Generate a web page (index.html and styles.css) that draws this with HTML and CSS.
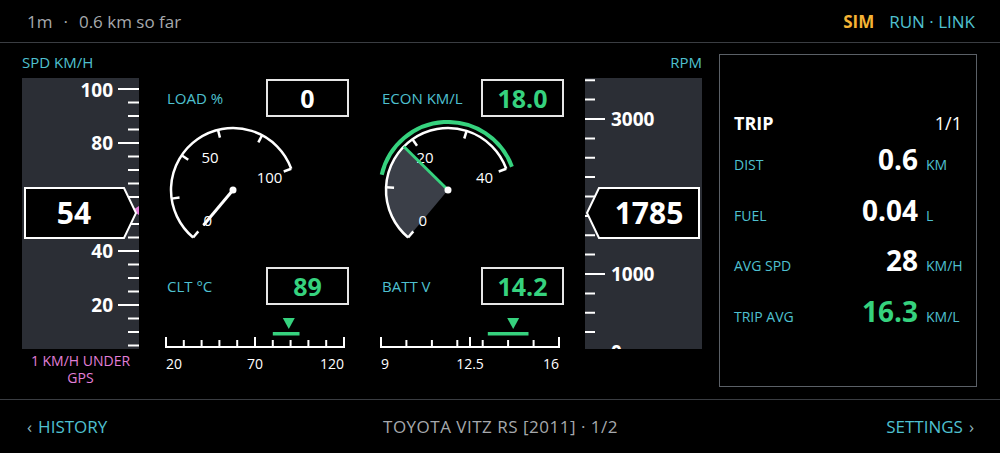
FILE: index.html
```html
<!DOCTYPE html>
<html lang="en">
<head>
  <meta charset="UTF-8" />
  <meta name="viewport" content="width=device-width, initial-scale=1.0" />
  <title>Trip Dash</title>
  <link rel="stylesheet" href="styles.css">
</head>
<body>
  <header class="topbar">
    <span class="sofar">1m<span class="dot">·</span>0.6 km so far</span>
    <span class="status"><b class="sim">SIM</b><span class="link">RUN · LINK</span></span>
  </header>

  <main class="dash">
    <!-- Geschwindigkeitsband -->
    <section class="tape-col">
      <p class="tape-label">SPD KM/H</p>
      <div class="tape">
        <svg width="117" height="271" viewBox="0 0 117 271">
          <path class="ticks" d="M96 11H117M106 24.5H117M106 38H117M106 51.5H117M96 65H117M106 78.5H117M106 92H117M106 105.5H117M96 119H117M106 132.5H117M106 146H117M106 159.5H117M96 173H117M106 186.5H117M106 200H117M106 213.5H117M96 227H117M106 240.5H117M106 254H117M106 267.5H117"/>
          <g class="tape-nums end">
            <text x="91" y="12">100</text>
            <text x="91" y="65">80</text>
            <text x="91" y="173">40</text>
            <text x="91" y="227">20</text>
          </g>
          <polygon class="gps-mark" points="117,128 110,132.5 117,137"/>
          <polygon class="readout" points="3,110 102,110 114,135 102,160 3,160"/>
          <text class="readout-num" x="52" y="134">54</text>
        </svg>
      </div>
      <p class="tape-note"><span>1 KM/H UNDER</span><span>GPS</span></p>
    </section>

    <section class="gauges">
      <div class="gauge">
        <div class="g-head"><span class="g-label">LOAD %</span><span class="g-value">0</span></div>
        <svg class="dial" width="190" height="130" viewBox="0 0 190 130">
          <path class="dial-arc" d="M33.15 117.49A62 62 0 1 1 131.26 48.79"/>
          <g class="dial-ticks">
            <line x1="127" y1="70" x2="135" y2="70" transform="rotate(-230 73 70)"/>
            <line x1="127" y1="70" x2="135" y2="70" transform="rotate(-188 73 70)"/>
            <line x1="127" y1="70" x2="135" y2="70" transform="rotate(-146 73 70)"/>
            <line x1="127" y1="70" x2="135" y2="70" transform="rotate(-104 73 70)"/>
            <line x1="127" y1="70" x2="135" y2="70" transform="rotate(-62 73 70)"/>
            <line x1="127" y1="70" x2="135" y2="70" transform="rotate(-20 73 70)"/>
          </g>
          <g class="dial-nums">
            <text x="47.9" y="99.9">0</text>
            <text x="50.1" y="37.2">50</text>
            <text x="109.6" y="56.7">100</text>
          </g>
          <line class="needle" x1="73" y1="70" x2="118" y2="70" transform="rotate(-230 73 70)"/>
          <circle class="hub" cx="73" cy="70" r="3.5"/>
        </svg>
      </div>

      <div class="gauge">
        <div class="g-head"><span class="g-label">ECON KM/L</span><span class="g-value gut">18.0</span></div>
        <svg class="dial" width="190" height="130" viewBox="0 0 190 130">
          <path class="sector" d="M73 70L33.15 117.49A62 62 0 0 1 28.78 26.55Z"/>
          <path class="green-arc" d="M6.74 54.7A68 68 0 0 1 136.9 46.74"/>
          <path class="dial-arc" d="M33.15 117.49A62 62 0 1 1 131.26 48.79"/>
          <g class="dial-ticks">
            <line x1="127" y1="70" x2="135" y2="70" transform="rotate(-230 73 70)"/>
            <line x1="127" y1="70" x2="135" y2="70" transform="rotate(-177.5 73 70)"/>
            <line x1="127" y1="70" x2="135" y2="70" transform="rotate(-125 73 70)"/>
            <line x1="127" y1="70" x2="135" y2="70" transform="rotate(-72.5 73 70)"/>
            <line x1="127" y1="70" x2="135" y2="70" transform="rotate(-20 73 70)"/>
          </g>
          <g class="dial-nums">
            <text x="47.9" y="99.9">0</text>
            <text x="50.1" y="37.2">20</text>
            <text x="109.6" y="56.7">40</text>
          </g>
          <line class="needle gruen" x1="73" y1="70" x2="135" y2="70" transform="rotate(-135.5 73 70)"/>
          <circle class="hub" cx="73" cy="70" r="3.5"/>
        </svg>
      </div>

      <div class="gauge">
        <div class="g-head"><span class="g-label">CLT °C</span><span class="g-value gut">89</span></div>
        <svg class="scale" width="190" height="62" viewBox="0 0 190 62">
          <rect class="band" x="112.8" y="20" width="26.7" height="3.5"/>
          <polygon class="marker" points="122.8,6 134.8,6 128.8,17"/>
          <path class="scale-line" d="M6 35H184M6 26V35M23.8 29V35M41.6 29V35M59.4 29V35M77.2 29V35M95 26V35M112.8 29V35M130.6 29V35M148.4 29V35M166.2 29V35M184 26V35"/>
          <g class="scale-nums">
            <text x="6" y="51" text-anchor="start">20</text>
            <text x="95" y="51" text-anchor="middle">70</text>
            <text x="184" y="51" text-anchor="end">120</text>
          </g>
        </svg>
      </div>

      <div class="gauge">
        <div class="g-head"><span class="g-label">BATT V</span><span class="g-value gut">14.2</span></div>
        <svg class="scale" width="190" height="62" viewBox="0 0 190 62">
          <rect class="band" x="112.8" y="20" width="40.7" height="3.5"/>
          <polygon class="marker" points="132.2,6 144.2,6 138.2,17"/>
          <path class="scale-line" d="M6 35H184M6 26V35M31.4 29V35M56.9 29V35M82.3 29V35M95 26V35M107.7 29V35M133.1 29V35M158.6 29V35M184 26V35"/>
          <g class="scale-nums">
            <text x="6" y="51" text-anchor="start">9</text>
            <text x="95" y="51" text-anchor="middle">12.5</text>
            <text x="184" y="51" text-anchor="end">16</text>
          </g>
        </svg>
      </div>
    </section>

    <!-- Drehzahlband -->
    <section class="tape-col rpm">
      <p class="tape-label">RPM</p>
      <div class="tape">
        <svg width="117" height="271" viewBox="0 0 117 271">
          <path class="ticks" d="M0 2.25H10M0 21.6H10M0 41H20M0 60.4H10M0 79.75H10M0 99.1H10M0 118.5H20M0 137.9H10M0 157.25H10M0 176.6H10M0 196H20M0 215.4H10M0 234.75H10M0 254.1H10M0 273.5H20"/>
          <g class="tape-nums">
            <text x="26" y="41">3000</text>
            <text x="26" y="196">1000</text>
            <text x="26" y="273.5">0</text>
          </g>
          <polygon class="readout" points="2,135 14,110 114,110 114,160 14,160"/>
          <text class="readout-num" x="64" y="134">1785</text>
        </svg>
      </div>
    </section>

    <aside class="trip">
      <div class="trip-head"><b>TRIP</b><span>1/1</span></div>
      <div class="trip-row"><span class="t-label">DIST</span><span class="t-val">0.6</span><span class="t-unit">KM</span></div>
      <div class="trip-row"><span class="t-label">FUEL</span><span class="t-val">0.04</span><span class="t-unit">L</span></div>
      <div class="trip-row"><span class="t-label">AVG SPD</span><span class="t-val">28</span><span class="t-unit">KM/H</span></div>
      <div class="trip-row"><span class="t-label">TRIP AVG</span><span class="t-val gut">16.3</span><span class="t-unit">KM/L</span></div>
    </aside>
  </main>

  <footer class="bottombar">
    <a class="nav"><span class="chev">‹</span>HISTORY</a>
    <span class="car">TOYOTA VITZ RS [2011] · 1/2</span>
    <a class="nav rechts">SETTINGS<span class="chev">›</span></a>
  </footer>
</body>
</html>
```

FILE: styles.css
```css
:root {
  --cyan: #4fc0d0;
  --gruen: #36d27e;
  --orange: #f5b335;
  --pink: #e27fd8;
  --grau: #a6a9ad;
  --band: #2b2e35;
  --linie: #3a3d42;
}

* {
  box-sizing: border-box;
  margin: 0;
  padding: 0;
}

body {
  width: 1000px;
  height: 453px;
  background: #000;
  color: #fff;
  font-family: 'Open Sans', 'Noto Sans', sans-serif;
  overflow: hidden;
}

.topbar {
  height: 43px;
  border-bottom: 1px solid var(--linie);
  display: flex;
  align-items: center;
  justify-content: space-between;
  padding: 0 25px 0 27px;
  font-size: 17px;
}

.sofar {
  color: var(--grau);
}

.sofar .dot {
  margin: 0 11px;
}

.sim {
  color: var(--orange);
  font-weight: 700;
  margin-right: 15px;
}

.link {
  color: var(--cyan);
}

.dash {
  display: flex;
  align-items: flex-start;
  height: 356px;
  padding: 11px 0 0 22px;
}

/* Baender links und rechts */
.tape-col {
  width: 117px;
}

.tape-col.rpm {
  margin-left: 20px;
}

.tape-label {
  font-size: 15px;
  line-height: 16px;
  color: var(--cyan);
  margin-bottom: 8px;
}

.rpm .tape-label {
  text-align: right;
}

.tape {
  height: 271px;
  background: var(--band);
}

.tape svg {
  display: block;
}

.ticks {
  stroke: #fff;
  stroke-width: 2;
  fill: none;
}

.tape-nums text {
  fill: #fff;
  font-weight: 700;
  font-size: 19px;
  dominant-baseline: central;
}

.tape-nums.end text {
  text-anchor: end;
}

.gps-mark {
  fill: var(--pink);
}

.readout {
  fill: #000;
  stroke: #fff;
  stroke-width: 2;
}

.readout-num {
  fill: #fff;
  font-weight: 700;
  font-size: 30px;
  text-anchor: middle;
  dominant-baseline: central;
}

.tape-note {
  margin-top: 3px;
  display: flex;
  flex-direction: column;
  align-items: center;
  font-size: 14px;
  line-height: 17px;
  color: var(--pink);
}

/* Anzeigen in der Mitte */
.gauges {
  display: grid;
  grid-template-columns: 190px 190px;
  column-gap: 25px;
  row-gap: 17px;
  margin: 25px 0 0 21px;
}

.g-head {
  display: flex;
  align-items: center;
  justify-content: space-between;
  height: 38px;
  padding: 0 1px 0 7px;
}

.g-label {
  font-size: 15px;
  color: var(--cyan);
}

.g-value {
  width: 83px;
  height: 38px;
  border: 2px solid #e6e6e6;
  display: flex;
  align-items: center;
  justify-content: center;
  font-size: 25px;
  font-weight: 700;
}

.gut {
  color: var(--gruen);
}

.dial {
  display: block;
  margin-top: 3px;
}

.dial-arc {
  fill: none;
  stroke: #fff;
  stroke-width: 2.5;
}

.dial-ticks line {
  stroke: #fff;
  stroke-width: 2.5;
}

.dial-nums text {
  fill: #fff;
  font-size: 15px;
  text-anchor: middle;
  dominant-baseline: central;
}

.sector {
  fill: #3b3f48;
}

.green-arc {
  fill: none;
  stroke: var(--gruen);
  stroke-width: 4;
}

.needle {
  stroke: #fff;
  stroke-width: 3;
  stroke-linecap: round;
}

.needle.gruen {
  stroke: var(--gruen);
  stroke-linecap: butt;
}

.hub {
  fill: #fff;
}

.scale {
  display: block;
  margin-top: 7px;
}

.band,
.marker {
  fill: var(--gruen);
}

.scale-line {
  fill: none;
  stroke: #fff;
  stroke-width: 2;
  stroke-linecap: square;
}

.scale-nums text {
  fill: #fff;
  font-size: 14px;
  dominant-baseline: central;
}

/* Fahrtdaten */
.trip {
  width: 258px;
  height: 333px;
  margin-left: 17px;
  border: 1.5px solid #5b6067;
  padding: 54px 12px 0 14px;
}

.trip-head {
  display: flex;
  justify-content: space-between;
  align-items: center;
  height: 28px;
  font-size: 18px;
  margin-bottom: 4px;
}

.trip-head span {
  padding-right: 2px;
}

.trip-row {
  display: grid;
  grid-template-columns: 1fr auto 38px;
  column-gap: 8px;
  align-items: baseline;
  height: 36px;
  margin-bottom: 14.5px;
}

.t-label,
.t-unit {
  font-size: 14px;
  color: var(--cyan);
}

.t-val {
  font-size: 28px;
  line-height: 36px;
  font-weight: 700;
}

.bottombar {
  height: 54px;
  border-top: 1px solid var(--linie);
  display: grid;
  grid-template-columns: 1fr auto 1fr;
  align-items: center;
  padding: 0 26px 0 27px;
  font-size: 17px;
}

.nav {
  color: var(--cyan);
}

.nav.rechts {
  justify-self: end;
}

.chev {
  color: #8fb4bb;
  margin-right: 6px;
}

.rechts .chev {
  margin: 0 0 0 6px;
}

.car {
  color: var(--grau);
  letter-spacing: 0.5px;
}
```
